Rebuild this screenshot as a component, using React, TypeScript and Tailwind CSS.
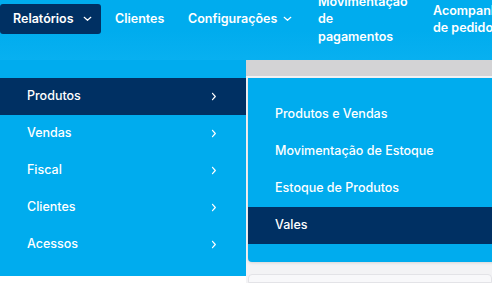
import React from "react";

const font = { fontFamily: "Inter, 'Noto Sans', sans-serif" };

function ChevronDown() {
  return (
    <svg width="9" height="6" viewBox="0 0 9 6" fill="none" className="shrink-0">
      <path d="M1.2 1.3 4.5 4.3 7.8 1.3" stroke="white" strokeWidth="1.2" strokeLinecap="round" strokeLinejoin="round" />
    </svg>
  );
}

function ChevronRight() {
  return (
    <svg width="6" height="9" viewBox="0 0 6 9" fill="none">
      <path d="M1.5 1.3 4.3 4.5 1.5 7.7" stroke="white" strokeWidth="1.2" strokeLinecap="round" strokeLinejoin="round" />
    </svg>
  );
}

const mainItems = ["Produtos", "Vendas", "Fiscal", "Clientes", "Acessos"];
const subItems = ["Produtos e Vendas", "Movimentação de Estoque", "Estoque de Produtos", "Vales"];

export default function App() {
  return (
    <div className="relative h-[283px] w-[492px] overflow-hidden bg-white text-white" style={font}>
      {/* top bar */}
      <header className="h-[60px] bg-gradient-to-b from-[#00acee] via-[#00acee] to-[#08b0f0]">
        <nav className="flex h-[38px] items-center text-[12.5px] font-semibold leading-[17.5px]">
          <button className="flex h-[30px] w-[101px] shrink-0 items-center rounded-[3px] bg-[#003063] pl-[13px]">
            <span className="w-[70px] text-left">Relatórios</span>
            <ChevronDown />
          </button>
          <a className="ml-[14px] w-[73px] shrink-0">Clientes</a>
          <a className="flex w-[130px] shrink-0 items-center">
            <span className="w-[95px]">Configurações</span>
            <ChevronDown />
          </a>
          <a className="w-[115px] shrink-0">
            Movimentação
            <br />
            de
            <br />
            pagamentos
          </a>
          <a className="shrink-0 whitespace-nowrap">
            Acompanhamento
            <br />
            de pedidos
          </a>
        </nav>
      </header>

      {/* page behind the menus */}
      <div className="ml-[246px] flex h-[223px] flex-col bg-[#f3f3f5]">
        <div className="h-[18px] bg-[#d3d3d5]" />
        <div className="ml-[2px] mt-[198px] h-[10px] rounded-t-[4px] border border-[#e3e3e7] bg-[#f8f8fa]" />
      </div>

      {/* dropdown */}
      <div className="absolute left-0 top-[60px] flex h-[216px] w-[246px] flex-col bg-[#00acee] pt-[18px] text-[12.5px] font-medium">
        {mainItems.map((item, i) => (
          <div
            key={item}
            className={`flex h-[37px] items-center justify-between pl-[27px] pr-[29px] ${i === 0 ? "bg-[#003063]" : ""}`}
          >
            <span>{item}</span>
            <ChevronRight />
          </div>
        ))}
      </div>

      {/* submenu */}
      <div className="absolute left-[248px] top-[78px] flex h-[184px] w-[260px] flex-col rounded-bl-[4px] bg-[#00acee] py-[18px] text-[12.5px] font-medium shadow-[0_1px_3px_rgba(0,0,0,0.12)]">
        {subItems.map((item, i) => (
          <div
            key={item}
            className={`flex h-[37px] items-center pl-[27px] ${i === 3 ? "bg-[#003063]" : ""}`}
          >
            {item}
          </div>
        ))}
      </div>
    </div>
  );
}
